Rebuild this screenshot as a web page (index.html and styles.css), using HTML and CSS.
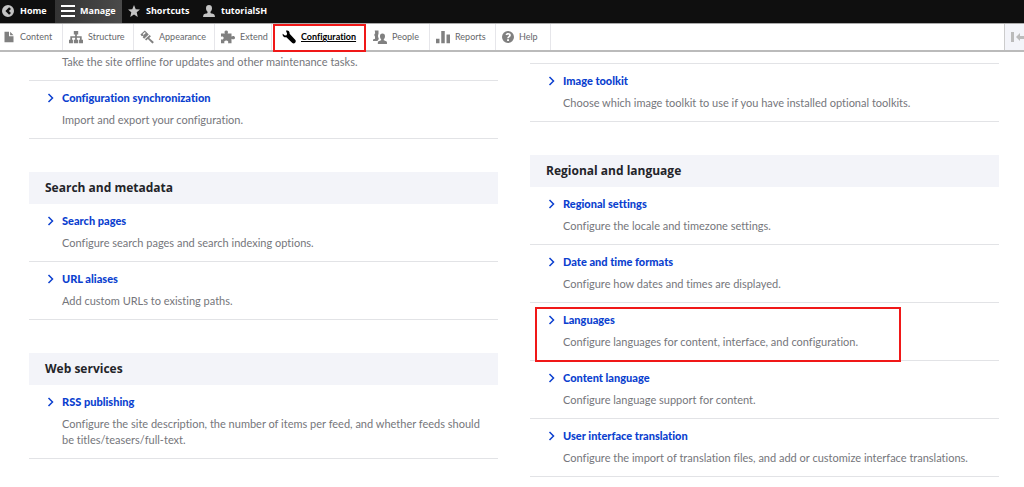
FILE: index.html
```html
<!DOCTYPE html>
<html lang="en">
<head>
<meta charset="utf-8">
<title>Configuration</title>
<link rel="stylesheet" href="styles.css">
</head>
<body>
<header class="toolbar">
  <nav class="bar" aria-label="Toolbar">
    <a class="bar-item bar-home" href="#"><svg class="icon" viewBox="0 0 16 16"><path fill-rule="evenodd" d="M8 0a8 8 0 1 0 0 16A8 8 0 0 0 8 0zm1.500 3L12 5.300 9.200 8 12 10.700 9.500 13 4.500 8z"/></svg>Home</a>
    <a class="bar-item bar-manage" href="#"><svg class="icon icon-menu" viewBox="0 0 14 12"><path d="M0 0h14v2H0zM0 5h14v2H0zM0 10h14v2H0z"/></svg>Manage</a>
    <a class="bar-item bar-shortcuts" href="#"><svg class="icon" viewBox="0 0 16 16"><path d="M8 0l2.300 5.600 5.700.4-4.400 3.800L13 16l-5-3.500L3 16l1.400-6.200L0 6l5.700-.4z"/></svg>Shortcuts</a>
    <a class="bar-item" href="#"><svg class="icon" viewBox="0 0 16 16"><path d="M8 0c2.500 0 4 1.700 4 4.200 0 2-.8 3.600-2 4.800v1.800c1 1 5 .8 5.600 3.200L16 16H0l.4-2C1 11.600 5 11.800 6 10.800V9C4.800 7.800 4 6.200 4 4.200 4 1.700 5.500 0 8 0z"/></svg>tutorialSH</a>
  </nav>
  <nav class="tray" aria-label="Administration menu">
    <a class="tray-item tray-content" href="#"><svg class="icon" viewBox="0 0 16 16"><path d="M2 1h6v6h6v8H2zM9.500 1L14 5.500H9.500z"/></svg>Content</a>
    <a class="tray-item tray-structure" href="#"><svg class="icon icon-wide" viewBox="0 0 16 16"><path d="M5.500 1h5v4H9v2h5.500v4H16v4h-4.500v-4h1V8.800H9V11h1.500v4h-5v-4H7V8.800H3.500V11h1v4H0v-4h1.500V7H7V5H5.500z"/></svg>Structure</a>
    <a class="tray-item tray-appearance" href="#"><svg class="icon icon-wide" viewBox="0 0 16 16"><path fill-rule="evenodd" d="M5.500.5L10 5.200 4.800 10 3 8.200l1.300-2L2 7 .5 5.200zM5.600 2.400L3 4.700l1 .9 2.600-2.300zM11 5.800l1.500 1.400-2 2 5 4.300c.5.800-.8 2.200-1.700 1.700L9 10.400 7 12l-1.300-1.300z"/></svg>Appearance</a>
    <a class="tray-item tray-extend" href="#"><svg class="icon icon-wide" viewBox="0 0 16 16"><path d="M0 4h4.500C3.500 2.500 4 .5 6 .5s2.500 2 1.500 3.500H12v3.500c1.500-1 4-.8 4 1.300s-2.500 2.300-4 1.200V15H8c1-2-.2-3-2-3s-3 1-2 3H0v-4.500c2 .8 3-.3 3-1.500S2 7 0 7.700z"/></svg>Extend</a>
    <a class="tray-item tray-configuration" href="#" aria-current="page"><svg class="icon icon-wide" viewBox="0 0 16 16"><path d="M4.500.8C7-.2 9 1.500 8.700 4.300L15.300 11.500c1.500 2.300-1.300 5-3.500 3.300L5 8.200C2.500 8.800.2 7 .8 4.200l2.500 2.200 2-.4.500-2z"/></svg>Configuration</a>
    <a class="tray-item tray-people" href="#"><svg class="icon icon-wide" viewBox="0 0 16 16"><path d="M2 .5h4.300v3.800C5.500 6 5.600 8 6.500 9.500v1L5 12.500H0v-1.600l2.300-1V7.500C1.300 6.200 1.200 4.600 2.500 3.700z"/><path d="M10.800 4c2 0 2.900 1.300 2.900 3 0 1.500-.5 2.600-1.400 3.500v1.300c1 .7 3 .6 3.600 2L16 16H5.500l.1-2.200c.6-1.400 2.700-1.300 3.700-2v-1.300C8.400 9.600 8 8.500 8 7c0-1.700.8-3 2.800-3z"/></svg>People</a>
    <a class="tray-item tray-reports" href="#"><svg class="icon icon-wide" viewBox="0 0 16 16"><path d="M0 10h4v5H0zM6 1h4v14H6zM12 5h4v10h-4z"/></svg>Reports</a>
    <a class="tray-item tray-help" href="#"><svg class="icon" viewBox="0 0 16 16"><path fill-rule="evenodd" d="M8 0a8 8 0 1 0 0 16A8 8 0 0 0 8 0zM4.700 5C5.300 3.200 6.500 2.500 8.100 2.500c2.200 0 3.700 1.200 3.700 3 0 2.200-2.500 2.500-2.600 4.200H6.900C6.900 7.200 9.300 7 9.300 5.600c0-1.300-2-1.300-2.400.2zM6.800 10.900h2.500v2.300H6.800z"/></svg>Help</a>
    <button class="orientation" type="button" aria-label="Vertical orientation"><svg class="orientation-icon" viewBox="0 0 16 12"><path d="M1 1h3v10H1zM6 6l4-4v3h6v3h-6v2z"/></svg></button>
  </nav>
</header>
<main class="columns">
  <div class="column column-first">
    <section class="panel">
      <div class="entry entry-cut">
        <p class="text">Take the site offline for updates and other maintenance tasks.</p>
      </div>
      <div class="entry">
        <a class="title" href="#"><svg class="chevron" viewBox="0 0 6 10"><path d="M1 1l4 4-4 4"/></svg>Configuration synchronization</a>
        <p class="text">Import and export your configuration.</p>
      </div>
    </section>
    <section class="panel">
      <h2 class="heading">Search and metadata</h2>
      <div class="entry">
        <a class="title" href="#"><svg class="chevron" viewBox="0 0 6 10"><path d="M1 1l4 4-4 4"/></svg>Search pages</a>
        <p class="text">Configure search pages and search indexing options.</p>
      </div>
      <div class="entry">
        <a class="title" href="#"><svg class="chevron" viewBox="0 0 6 10"><path d="M1 1l4 4-4 4"/></svg>URL aliases</a>
        <p class="text">Add custom URLs to existing paths.</p>
      </div>
    </section>
    <section class="panel">
      <h2 class="heading">Web services</h2>
      <div class="entry">
        <a class="title" href="#"><svg class="chevron" viewBox="0 0 6 10"><path d="M1 1l4 4-4 4"/></svg>RSS publishing</a>
        <p class="text">Configure the site description, the number of items per feed, and whether feeds should be titles/teasers/full-text.</p>
      </div>
    </section>
  </div>
  <div class="column">
    <section class="panel">
      <div class="entry entry-cut">
        <p class="text">Configure styles that can be used for resizing or adjusting images on display.</p>
      </div>
      <div class="entry">
        <a class="title" href="#"><svg class="chevron" viewBox="0 0 6 10"><path d="M1 1l4 4-4 4"/></svg>Image toolkit</a>
        <p class="text">Choose which image toolkit to use if you have installed optional toolkits.</p>
      </div>
    </section>
    <section class="panel">
      <h2 class="heading">Regional and language</h2>
      <div class="entry">
        <a class="title" href="#"><svg class="chevron" viewBox="0 0 6 10"><path d="M1 1l4 4-4 4"/></svg>Regional settings</a>
        <p class="text">Configure the locale and timezone settings.</p>
      </div>
      <div class="entry">
        <a class="title" href="#"><svg class="chevron" viewBox="0 0 6 10"><path d="M1 1l4 4-4 4"/></svg>Date and time formats</a>
        <p class="text">Configure how dates and times are displayed.</p>
      </div>
      <div class="entry entry-marked">
        <a class="title" href="#"><svg class="chevron" viewBox="0 0 6 10"><path d="M1 1l4 4-4 4"/></svg>Languages</a>
        <p class="text">Configure languages for content, interface, and configuration.</p>
      </div>
      <div class="entry">
        <a class="title" href="#"><svg class="chevron" viewBox="0 0 6 10"><path d="M1 1l4 4-4 4"/></svg>Content language</a>
        <p class="text">Configure language support for content.</p>
      </div>
      <div class="entry">
        <a class="title" href="#"><svg class="chevron" viewBox="0 0 6 10"><path d="M1 1l4 4-4 4"/></svg>User interface translation</a>
        <p class="text">Configure the import of translation files, and add or customize interface translations.</p>
      </div>
    </section>
  </div>
</main>
</body>
</html>
```

FILE: styles.css
```css
* { box-sizing: border-box; }

body {
  margin: 0;
  background: #fff;
  color: #75767b;
  font: 11px/16px Lato, sans-serif;
  font-variant-ligatures: none;
}

a { color: inherit; text-decoration: none; }

.toolbar {
  position: sticky;
  top: 0;
  z-index: 1;
  font-size: 9px;
}

.bar {
  display: flex;
  height: 23px;
  background: #0f0f0f;
  color: #fff;
  font-family: "Open Sans", sans-serif;
  font-weight: 700;
}

.bar-item {
  display: flex;
  align-items: center;
  gap: 6px;
  padding: 0 6px 2px;
}
.bar-item .icon { fill: #c4c4c4; }
.bar-home { width: 55px; padding-left: 2px; }
.bar-manage { width: 67px; gap: 5px; background: linear-gradient(90deg, #333, #4a4a4a); }
.bar-item .icon-menu { width: 14px; fill: #fff; }
.bar-shortcuts { width: 75px; }

.icon { flex: none; width: 12px; height: 12px; fill: #808080; }
.icon-wide { width: 14px; height: 14px; }

.tray {
  display: flex;
  height: 29px;
  background: #fff;
  color: #66676b;
  border-top: 1px solid #aaa;
  border-bottom: 2px solid #bbb;
}

.tray-item {
  display: flex;
  align-items: center;
  gap: 5px;
  padding-left: 6px;
  border-right: 1px solid #e6e6ea;
}
.tray-content { width: 63px; padding-left: 3px; }
.tray-structure { width: 71px; }
.tray-appearance { width: 81px; }
.tray-extend { width: 57px; }
.tray-configuration {
  position: relative;
  width: 95px;
  padding-left: 10px;
  border: 0;
  color: #000;
  font-weight: 700;
  text-decoration: underline;
}
.tray-configuration::after {
  content: "";
  position: absolute;
  inset: 0 1px -2px 1px;
  border: 2px solid #f01818;
}
.tray-configuration .icon { fill: #000; }
.tray-people { width: 63px; }
.tray-reports { width: 66px; }
.tray-help { width: 55px; }

.orientation {
  display: flex;
  align-items: center;
  width: 20px;
  margin-left: auto;
  padding: 0 0 0 5px;
  border: 0;
  border-left: 1px solid #ccc;
  background: #f3f4f9;
  overflow: hidden;
}
.orientation-icon { flex: none; width: 16px; height: 12px; fill: #bbb; }

.columns {
  display: grid;
  grid-template-columns: 1fr 1fr;
  gap: 32px;
  margin-top: -15px;
  padding: 0 25px 8px 29px;
}
.column-first { padding-top: 17px; }

.panel + .panel { margin-top: 33px; }

.heading {
  margin: 0;
  padding: 8px 16px;
  background: #f3f4f9;
  color: #232429;
  font: 700 12px/16px "Open Sans", sans-serif;
}

.entry {
  padding: 9px 12px 10px 33px;
  border-bottom: 1px solid #e2e3e6;
}
.entry-cut { padding-top: 0; }

.title {
  display: flex;
  align-items: center;
  gap: 8px;
  margin: 0 0 6px -15px;
  color: #0b3fcf;
  font-weight: 900;
}

.chevron {
  width: 7px;
  height: 10px;
  fill: none;
  stroke: currentColor;
  stroke-width: 1.5;
}

.text { margin: 0; }

.entry-marked { position: relative; }
.entry-marked::after {
  content: "";
  position: absolute;
  inset: 4px 98px -2px 5px;
  border: 2px solid #f01818;
}
```
